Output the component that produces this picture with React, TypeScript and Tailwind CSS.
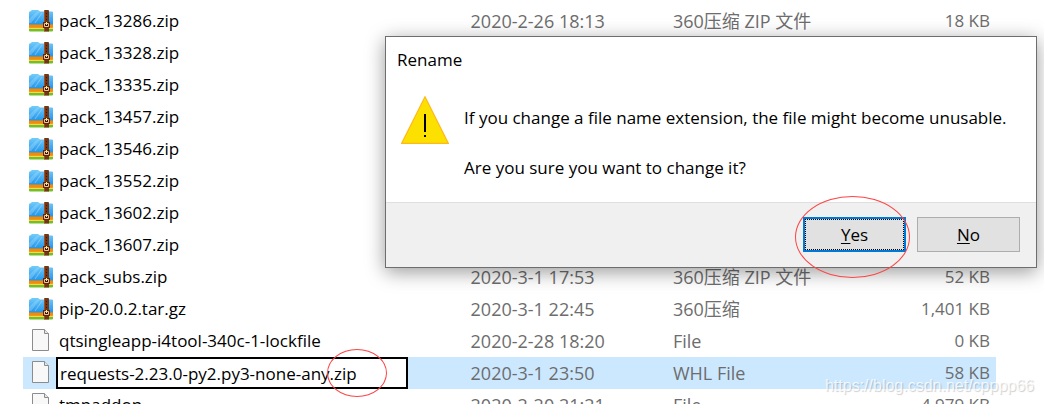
type Entry = {
  name: string;
  date?: string;
  type?: string;
  size?: string;
  kind: "archive" | "file";
  renaming?: boolean;
};

const entries: Entry[] = [
  { name: "pack_13286.zip", date: "2020-2-26 18:13", type: "360压缩 ZIP 文件", size: "18 KB", kind: "archive" },
  { name: "pack_13328.zip", kind: "archive" },
  { name: "pack_13335.zip", kind: "archive" },
  { name: "pack_13457.zip", kind: "archive" },
  { name: "pack_13546.zip", kind: "archive" },
  { name: "pack_13552.zip", kind: "archive" },
  { name: "pack_13602.zip", kind: "archive" },
  { name: "pack_13607.zip", kind: "archive" },
  { name: "pack_subs.zip", date: "2020-3-1 17:53", type: "360压缩 ZIP 文件", size: "52 KB", kind: "archive" },
  { name: "pip-20.0.2.tar.gz", date: "2020-3-1 22:45", type: "360压缩", size: "1,401 KB", kind: "archive" },
  { name: "qtsingleapp-i4tool-340c-1-lockfile", date: "2020-2-28 18:20", type: "File", size: "0 KB", kind: "file" },
  { name: "requests-2.23.0-py2.py3-none-any.zip", date: "2020-3-1 23:50", type: "WHL File", size: "58 KB", kind: "file", renaming: true },
  { name: "tmpaddon", date: "2020-2-20 21:21", type: "File", size: "4,979 KB", kind: "file" },
];

function ArchiveIcon() {
  return (
    <svg className="h-6 w-6 shrink-0" viewBox="0 0 24 24" aria-hidden="true">
      <defs>
        <linearGradient id="sky" x1="0" y1="0" x2="0" y2="1">
          <stop offset="0" stopColor="#72cbfb" />
          <stop offset="1" stopColor="#2494e8" />
        </linearGradient>
      </defs>
      <path d="M0 18h24v3.5q0 1-1 1H1q-1 0-1-1z" fill="#72bf2c" />
      <path d="M0 17h24v3H0z" fill="#f9d648" />
      <path d="M0 15h24v3.8H0z" fill="#f58a07" />
      <path d="M0 3.5Q0 2.5 1 2.5L3 1H9L11 2.5H23Q24 2.5 24 3.5V15.5H0z" fill="url(#sky)" />
      <path d="M0 10 8 2.5H11L2 14H0z" fill="#a5e0ff" opacity=".35" />
      <path d="M6 14 13 4" stroke="#a5e0ff" strokeWidth=".8" opacity=".7" />
      <path d="M15 2q0-1 1-1h3q1 0 1 1v20.5h-5z" fill="#743514" />
      <path d="M15 2h1v20h-1z" fill="#9a5227" />
      <path d="M17 4h1v1h-1zM17 7h1v1h-1zM17 10h1v1h-1z" fill="#341404" />
      <path d="M14 13h7v6h-7z" fill="#64280c" />
      <path d="M15.5 14.5h4v3h-4z" fill="#3d1606" stroke="#ebc997" />
      <path d="M17 13h1v3h-1z" fill="#ffe3ac" />
    </svg>
  );
}

function FileIcon() {
  return (
    <svg className="h-6 w-6 shrink-0" viewBox="0 0 24 24" aria-hidden="true">
      <path d="M3.5 .5H15.5L19.5 4.5V21.5H3.5z" fill="#f8f8f8" stroke="#8c8c8c" />
      <path d="M15.5 .5V4.5H19.5" fill="#e7e7e7" stroke="#8c8c8c" />
    </svg>
  );
}

function WarningIcon() {
  return (
    <svg className="h-12 w-12 shrink-0" viewBox="0 0 48 48" role="img" aria-label="Warning">
      <path d="M24 .8 47.4 47.4H.6z" fill="#fce100" stroke="#fdb91b" strokeWidth="1.2" />
      <path d="M23 18h2v18h-2zM23 39h2v2h-2z" fill="#000" />
    </svg>
  );
}

export default function App() {
  return (
    <main className="relative h-screen overflow-hidden bg-white pt-[5px] pr-12 pl-[23px] font-['Open_Sans','Noto_Sans_CJK_SC',sans-serif] text-[17px] text-black">
      <table className="w-full table-fixed border-collapse text-left leading-6">
        <colgroup>
          <col className="w-[46%]" />
          <col className="w-[20.8%]" />
          <col />
          <col className="w-[14%]" />
        </colgroup>
        <tbody>
          {entries.map((e) => (
            <tr key={e.name} className={e.renaming ? "h-8 bg-[#cce8ff]" : "h-8"}>
              <td className="p-0">
                <div className="flex h-8 items-center pl-1.5">
                  {e.kind === "archive" ? <ArchiveIcon /> : <FileIcon />}
                  {e.renaming ? (
                    <div className="relative ml-[3px] w-[352px]">
                      <input
                        aria-label="File name"
                        defaultValue={e.name}
                        className="block h-8 w-full border-2 border-black bg-white px-0.5 outline-none"
                      />
                      <div className="pointer-events-none absolute -top-2 left-[271px] h-12 w-[60px] rounded-[50%] border border-[#f44]" />
                    </div>
                  ) : (
                    <span className="ml-1.5 whitespace-nowrap">{e.name}</span>
                  )}
                </div>
              </td>
              <td className="p-0 text-lg leading-6 whitespace-nowrap text-[#6d6d6d]">{e.date}</td>
              <td className="p-0 text-lg leading-6 whitespace-nowrap text-[#6d6d6d]">{e.type}</td>
              <td className="p-0 pr-1.5 text-right whitespace-nowrap text-[#6d6d6d]">{e.size}</td>
            </tr>
          ))}
        </tbody>
      </table>

      <section
        role="dialog"
        aria-labelledby="dialog-title"
        className="absolute top-9 right-[7px] left-[385px] border border-[#6e6e6e] bg-white shadow-[0_4px_18px_rgba(0,0,0,0.4)]"
      >
        <h1 id="dialog-title" className="px-[11px] pt-[11px] leading-6">Rename</h1>
        <div className="flex gap-[15px] px-[15px] pt-6 pb-[22px]">
          <WarningIcon />
          <div className="flex flex-col gap-[26px] pt-2.5 leading-6 whitespace-nowrap">
            <p>If you change a file name extension, the file might become unusable.</p>
            <p>Are you sure you want to change it?</p>
          </div>
        </div>
        <div className="flex justify-end gap-[11px] border-t border-[#dfdfdf] bg-[#f0f0f0] px-4 pt-3.5 pb-[15px]">
          <div className="relative">
            <button type="button" className="block h-[35px] w-[103px] border-2 border-[#0078d7] bg-[#e1e1e1]">
              <span className="flex h-full items-center justify-center border border-dotted border-black">
                <span><u className="underline-offset-2">Y</u>es</span>
              </span>
            </button>
            <div className="pointer-events-none absolute -top-[21px] -left-2 h-[82px] w-[115px] rounded-[50%] border border-[#f44]" />
          </div>
          <button type="button" className="h-[35px] w-[103px] border border-[#adadad] bg-[#e1e1e1]">
            <u className="underline-offset-2">N</u>o
          </button>
        </div>
      </section>

      <p className="absolute right-2.5 bottom-1.5 font-['Liberation_Sans',sans-serif] text-base leading-6 text-white/80 [text-shadow:1px_1px_1px_rgba(0,0,0,0.2)]">
        https://blog.csdn.net/cpppp66
      </p>
    </main>
  );
}
